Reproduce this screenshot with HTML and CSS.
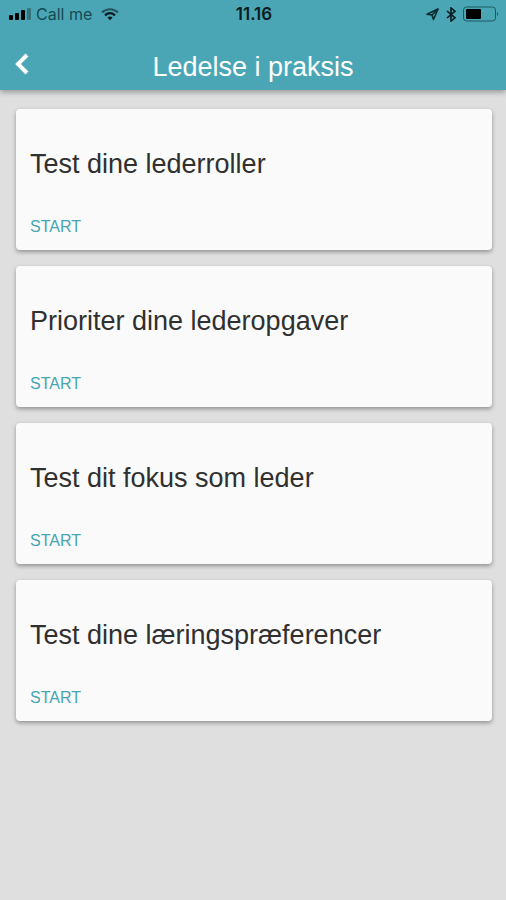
FILE: index.html
```
<!DOCTYPE html>
<html lang="da">
<head>
    <meta charset="UTF-8">
    <meta name="viewport" content="width=device-width, initial-scale=1.0">
    <title>Ledelse i praksis</title>
    <link rel="stylesheet" href="styles.css">
</head>
<body>
    <header class="header">
        <div class="status-bar">
            <div class="status-left">
                <svg class="signal" width="24" height="14" viewBox="0 0 24 14">
                    <rect x="1" y="8" width="4" height="5" rx="1"/>
                    <rect x="7" y="6" width="4" height="7" rx="1"/>
                    <rect x="13" y="3" width="4" height="10" rx="1"/>
                    <rect x="19" y="1" width="4" height="12" rx="1" opacity="0.3"/>
                </svg>
                <span class="carrier">Call me</span>
                <svg class="wifi" width="18" height="14" viewBox="0 0 18 14" fill="none" stroke="#0a1c20">
                    <path d="M1 5.5C5.5 1 12.500 1 17 5.500" stroke-width="2" opacity="0.6"/>
                    <path d="M4 8.300C7 5.600 11 5.600 14 8.300" stroke-width="2.400"/>
                    <path d="M6.400 10.600Q9 8.600 11.600 10.600L9 13.200Z" fill="#0a1c20" stroke="none"/>
                </svg>
            </div>
            <span class="time">11.16</span>
            <div class="status-right">
                <svg width="13" height="13" viewBox="0 0 13 13" fill="none" stroke="#0a2a30" stroke-width="1.600" stroke-linejoin="round">
                    <path d="M12 1L1 6.200L6 7L7.500 11.500Z"/>
                    <path d="M12 1L6 7"/>
                </svg>
                <svg width="10" height="15" viewBox="0 0 10 15" fill="none" stroke="#0a1c20" stroke-width="1.600">
                    <path d="M1 4L9 10.800L5 14V1L9 4.200L1 11"/>
                </svg>
                <svg class="battery" width="37" height="16" viewBox="0 0 37 16">
                    <rect x="0.500" y="1" width="32" height="14" rx="3" fill="none" stroke="#1d5a65" stroke-width="1"/>
                    <rect x="3" y="3" width="15" height="10" rx="1" fill="#000"/>
                    <path d="M34 6Q36.500 8 34 10Z" fill="#1d5a65"/>
                </svg>
            </div>
        </div>
        <div class="nav-bar">
            <button class="back" type="button" aria-label="Tilbage">
                <svg width="14" height="22" viewBox="0 0 14 22" fill="none" stroke="#fff" stroke-width="4">
                    <path d="M12 2L3 11L12 20"/>
                </svg>
            </button>
            <h1 class="title">Ledelse i praksis</h1>
        </div>
    </header>

    <main class="cards">
        <section class="card">
            <h2 class="card-title">Test dine lederroller</h2>
            <button class="start" type="button">START</button>
        </section>
        <section class="card">
            <h2 class="card-title">Prioriter dine lederopgaver</h2>
            <button class="start" type="button">START</button>
        </section>
        <section class="card">
            <h2 class="card-title">Test dit fokus som leder</h2>
            <button class="start" type="button">START</button>
        </section>
        <section class="card">
            <h2 class="card-title">Test dine læringspræferencer</h2>
            <button class="start" type="button">START</button>
        </section>
    </main>
</body>
</html>
```

FILE: styles.css
```
* {
    box-sizing: border-box;
}
body {
    margin: 0;
    min-height: 100vh;
    background: #dfdfdf;
    font-family: "Liberation Sans", Arial, sans-serif;
}
svg {
    display: block;
}
button {
    padding: 0;
    border: none;
    background: none;
    font-family: inherit;
    cursor: pointer;
}
.header {
    background: #4aa6b5;
    box-shadow: 0 2px 6px rgba(0, 0, 0, 0.35);
}
.status-bar {
    display: grid;
    grid-template-columns: 1fr auto 1fr;
    align-items: center;
    height: 28px;
    padding: 0 6px 0 8px;
    color: #0a1c20;
}
.status-left,
.status-right {
    display: flex;
    align-items: center;
}
.status-right {
    justify-content: flex-end;
    gap: 7px;
}
.carrier {
    margin: 0 9px 0 4px;
    color: #174a54;
    font-family: Inter, sans-serif;
    font-size: 16px;
}
.time {
    font-family: Inter, sans-serif;
    font-size: 17px;
    font-weight: 600;
}
.nav-bar {
    display: grid;
    grid-template-columns: 40px 1fr 40px;
    align-items: center;
    height: 62px;
}
.back {
    display: flex;
    align-items: center;
    height: 40px;
    padding: 10px 0 0 15px;
}
.title {
    margin: 0;
    padding-top: 16px;
    color: #fff;
    font-size: 27px;
    font-weight: normal;
    line-height: 30px;
    text-align: center;
}
.cards {
    display: flex;
    flex-direction: column;
    gap: 16px;
    padding: 19px 14px 19px 16px;
}
.card {
    padding: 40px 14px 13px;
    border-radius: 4px;
    background: #fafafa;
    box-shadow: 0 2px 4px rgba(0, 0, 0, 0.35);
}
.card-title {
    margin: 0 0 38px;
    color: #303030;
    font-size: 27px;
    font-weight: normal;
    line-height: 30px;
}
.start {
    display: block;
    color: #45a5b3;
    font-size: 16px;
    line-height: 20px;
}
```
